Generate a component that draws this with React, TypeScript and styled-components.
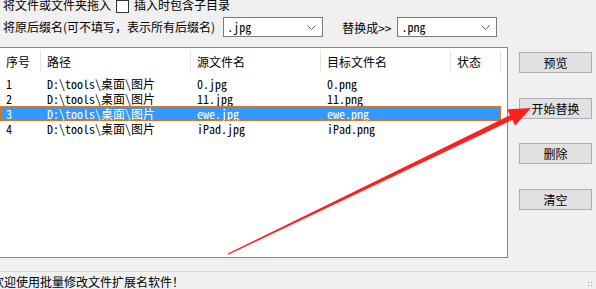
import React from 'react';
import styled, { createGlobalStyle } from 'styled-components';

const GlobalStyle = createGlobalStyle`
  html, body {
    margin: 0;
    padding: 0;
    background: #f0f0f0;
    overflow: hidden;
  }
`;

const UI_FONT = `"Noto Sans CJK SC", "Liberation Sans", sans-serif`;
const MONO_FONT = `"Noto Sans Mono CJK SC", "Liberation Mono", "Noto Sans CJK SC", monospace`;

interface Row {
  id: number;
  path: string;
  src: string;
  dst: string;
  status: string;
}

const rows: Row[] = [
  { id: 1, path: 'D:\\tools\\桌面\\图片', src: '0.jpg', dst: '0.png', status: '' },
  { id: 2, path: 'D:\\tools\\桌面\\图片', src: '11.jpg', dst: '11.png', status: '' },
  { id: 3, path: 'D:\\tools\\桌面\\图片', src: 'ewe.jpg', dst: 'ewe.png', status: '' },
  { id: 4, path: 'D:\\tools\\桌面\\图片', src: 'iPad.jpg', dst: 'iPad.png', status: '' },
];

const columns = [
  { title: '序号', width: 41 },
  { title: '路径', width: 150 },
  { title: '源文件名', width: 130 },
  { title: '目标文件名', width: 130 },
  { title: '状态', width: 50 },
];

const Chevron = () => (
  <svg width="9" height="5" viewBox="0 0 9 5">
    <path d="M0.5 0.5 L4.5 4.5 L8.5 0.5" fill="none" stroke="#606060" strokeWidth="1" />
  </svg>
);

const Combo = ({ value, gap }: { value: string; gap: number }) => (
  <ComboBox $gap={gap}>
    <ComboText>{value}</ComboText>
    <Chevron />
  </ComboBox>
);

const Arrow = () => (
  <ArrowLayer width="596" height="289" viewBox="0 0 596 289">
    <polygon
      points="227.8,253.5 510.1,115.3 507.3,109.4 531,108 515.1,125.6 512.3,119.8 228.2,254.8"
      fill="#ff1f1f"
    />
  </ArrowLayer>
);

const App = () => {
  return (
    <Window>
      <GlobalStyle />
      <TopRow>
        <Label>将文件或文件夹拖入</Label>
        <CheckBox />
        <Label>插入时包含子目录</Label>
      </TopRow>
      <SuffixRow>
        <Label>将原后缀名(可不填写，表示所有后缀名)</Label>
        <Combo value=".jpg" gap={8} />
        <ReplaceLabel>替换成&gt;&gt;</ReplaceLabel>
        <Combo value=".png" gap={6} />
      </SuffixRow>
      <Main>
        <ListBox>
          <Header>
            {columns.map((c) => (
              <HeaderCell key={c.title} $width={c.width}>
                {c.title}
              </HeaderCell>
            ))}
          </Header>
          <Rows>
            {rows.map((r) => (
              <ListRow key={r.id} $selected={r.id === 3}>
                <Cell $width={41}>{r.id}</Cell>
                <Cell $width={150}>{r.path}</Cell>
                <Cell $width={130}>{r.src}</Cell>
                <Cell $width={130}>{r.dst}</Cell>
                <Cell $width={50}>{r.status}</Cell>
              </ListRow>
            ))}
          </Rows>
        </ListBox>
        <Buttons>
          <Button>预览</Button>
          <Button>开始替换</Button>
          <Button>删除</Button>
          <Button>清空</Button>
        </Buttons>
      </Main>
      <StatusBar>
        <StatusText>欢迎使用批量修改文件扩展名软件！</StatusText>
        <Grip />
      </StatusBar>
      <Arrow />
    </Window>
  );
};
export default App;

const Window = styled.div`
  position: relative;
  width: 596px;
  height: 289px;
  overflow: hidden;
  display: flex;
  flex-direction: column;
  background: #f0f0f0;
  font-family: ${UI_FONT};
  font-size: 12px;
  color: #000;
`;
const TopRow = styled.div`
  display: flex;
  align-items: center;
  height: 18px;
  margin-top: -4px;
  padding-left: 3px;
  gap: 5px;
`;
const Label = styled.span`
  white-space: nowrap;
  line-height: 18px;
`;
const CheckBox = styled.div`
  width: 11px;
  height: 11px;
  border: 1px solid #333;
  background: #fff;
  margin-top: 2px;
`;
const SuffixRow = styled.div`
  display: flex;
  align-items: center;
  height: 20px;
  margin-top: 3px;
  padding-left: 3px;
`;
const ComboBox = styled.div<{ $gap: number }>`
  box-sizing: border-box;
  width: 100px;
  height: 20px;
  margin-left: ${(p) => p.$gap}px;
  border: 1px solid #7a7a7a;
  background: #fff;
  display: flex;
  align-items: center;
  justify-content: space-between;
  padding: 0 6px 0 3px;
`;
const ComboText = styled.span`
  font-family: ${MONO_FONT};
  font-size: 12px;
  line-height: 16px;
`;
const ReplaceLabel = styled.span`
  margin-left: 19px;
  white-space: nowrap;
`;
const Main = styled.div`
  display: flex;
  margin-top: 10px;
`;
const ListBox = styled.div`
  box-sizing: border-box;
  width: 509px;
  height: 211px;
  margin-left: -1px;
  border: 1px solid #828790;
  background: #fff;
  overflow: hidden;
`;
const Header = styled.div`
  display: flex;
  height: 25px;
`;
const HeaderCell = styled.div<{ $width: number }>`
  box-sizing: border-box;
  width: ${(p) => p.$width}px;
  flex: none;
  padding: 3px 0 0 6px;
  border-right: 1px solid #e5e5e5;
  margin: 2px 0 0;
  line-height: 18px;
`;
const Rows = styled.div`
  display: flex;
  flex-direction: column;
  padding-top: 3px;
`;
const ListRow = styled.div<{ $selected?: boolean }>`
  box-sizing: border-box;
  display: flex;
  width: 501px;
  height: 15px;
  align-items: center;
  font-family: ${MONO_FONT};
  background: ${(p) => (p.$selected ? '#3399ff' : 'transparent')};
  color: ${(p) => (p.$selected ? '#fff' : '#000')};
  outline: ${(p) => (p.$selected ? '1px dotted #e07a20' : 'none')};
  outline-offset: -1px;
`;
const Cell = styled.div<{ $width: number }>`
  box-sizing: border-box;
  width: ${(p) => p.$width}px;
  flex: none;
  padding-left: 6px;
  white-space: nowrap;
  line-height: 15px;
`;
const Buttons = styled.div`
  display: flex;
  flex-direction: column;
  gap: 24.5px;
  padding: 5px 0 0 11px;
`;
const Button = styled.div`
  box-sizing: border-box;
  width: 73px;
  height: 21px;
  border: 1px solid #adadad;
  background: #e1e1e1;
  display: flex;
  align-items: center;
  justify-content: center;
  font-size: 12px;
`;
const StatusBar = styled.div`
  position: relative;
  margin-top: 13px;
  border-top: 1px solid #d7d7d7;
  flex: 1;
  display: flex;
  align-items: center;
`;
const StatusText = styled.span`
  margin-left: -8px;
  white-space: nowrap;
  padding-top: 2px;
  line-height: 15px;
`;
const Grip = styled.div`
  position: absolute;
  right: 3px;
  bottom: 2px;
  width: 6px;
  height: 6px;
  background-image: radial-gradient(#a0a0a0 0.8px, transparent 1px);
  background-size: 3px 3px;
`;
const ArrowLayer = styled.svg`
  position: absolute;
  left: 0;
  top: 0;
  pointer-events: none;
`;
